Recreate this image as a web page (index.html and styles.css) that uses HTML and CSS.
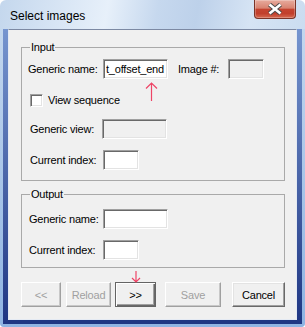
FILE: index.html
```html
<!DOCTYPE html>
<html lang="en">
<head>
    <meta charset="UTF-8">
    <title>Select images</title>
    <link rel="stylesheet" href="styles.css">
</head>
<body>
    <div class="window">
        <div class="titlebar">
            <span class="title">Select images</span>
            <button class="close" type="button">
                <svg width="42" height="19" viewBox="0 0 42 19">
                    <path d="M15.5 4.5 L26.5 13.5 M26.5 4.5 L15.5 13.5" stroke="#4b4b4b" stroke-width="4.6" fill="none"/>
                    <path d="M15.5 4.5 L26.5 13.5 M26.5 4.5 L15.5 13.5" stroke="#fff" stroke-width="2.6" fill="none"/>
                </svg>
            </button>
        </div>
        <div class="frame">
            <div class="client">
                <fieldset class="group group-input">
                    <legend>Input</legend>
                    <div class="row row-name">
                        <label class="lbl lbl-name">Generic name:</label>
                        <span class="field-wrap">
                            <input class="field field-wide" type="text" value="t_offset_end">
                            <svg class="mark mark-up" width="13" height="19" viewBox="0 0 13 19">
                                <path d="M6.5 1 V19 M1 6.5 L6.5 1 L12 6.5" stroke="#ee4466" stroke-width="1.2" fill="none"/>
                            </svg>
                        </span>
                        <label class="lbl lbl-image">Image #:</label>
                        <input class="field field-narrow" type="text" disabled>
                    </div>
                    <div class="row row-check">
                        <span class="checkbox"></span>
                        <span>View sequence</span>
                    </div>
                    <div class="row row-view">
                        <label class="lbl lbl-view">Generic view:</label>
                        <input class="field field-wide" type="text" disabled>
                    </div>
                    <div class="row row-index">
                        <label class="lbl lbl-index">Current index:</label>
                        <input class="field field-narrow" type="text">
                    </div>
                </fieldset>
                <fieldset class="group group-output">
                    <legend>Output</legend>
                    <div class="row row-out">
                        <label class="lbl lbl-out">Generic name:</label>
                        <input class="field field-wide" type="text">
                    </div>
                    <div class="row row-out row-out-index">
                        <label class="lbl lbl-out">Current index:</label>
                        <input class="field field-narrow" type="text">
                    </div>
                </fieldset>
                <div class="buttons">
                    <button class="btn btn-prev" type="button" disabled>&lt;&lt;</button>
                    <button class="btn btn-reload" type="button" disabled>Reload</button>
                    <button class="btn btn-next default" type="button">&gt;&gt;
                        <svg class="mark mark-down" width="10" height="12" viewBox="0 0 10 12">
                            <path d="M5 0 V11 M1 7 L5 11 L9 7" stroke="#ee4466" stroke-width="1.2" fill="none"/>
                        </svg>
                    </button>
                    <button class="btn btn-save" type="button" disabled>Save</button>
                    <button class="btn btn-cancel" type="button">Cancel</button>
                </div>
            </div>
        </div>
    </div>
</body>
</html>
```

FILE: styles.css
```css
*{
    margin: 0;
    padding: 0;
    box-sizing: border-box;
}
body{
    background: #fff;
    font-family: "Liberation Sans", Arial, sans-serif;
    font-size: 11px;
    letter-spacing: -0.2px;
    color: #000;
}
.window{
    width: 305px;
    height: 327px;
    display: flex;
    flex-direction: column;
    border-radius: 6px 6px 4px 4px;
    overflow: hidden;
    background: linear-gradient(100deg, #c4d7ed 0%, #d9e6f5 18%, #e7f0fa 30%, #c6d8ee 44%, #bdd1ea 55%, #d6e4f4 70%, #cadcf0 86%, #c5d9ee 100%);
}
.titlebar{
    height: 29px;
    display: flex;
    align-items: flex-start;
    padding-left: 10px;
}
.title{
    font-size: 12px;
    line-height: 12px;
    letter-spacing: 0;
    margin-top: 10px;
}
.close{
    margin-left: auto;
    margin-right: 9px;
    width: 42px;
    height: 19px;
    border: 1px solid #7a3428;
    border-top: none;
    border-radius: 0 0 4px 4px;
    background: linear-gradient(#e7ab9d 0%, #d88371 45%, #c4432f 52%, #c13f2c 75%, #d56a50 100%);
    display: flex;
    align-items: center;
    justify-content: center;
    box-shadow: inset 0 0 0 1px rgba(255,255,255,0.25);
}
.close svg{
    display: block;
    flex: none;
}

/* window frame around the client area */
.frame{
    flex: 1;
    display: flex;
    padding: 0 8px 7px;
    background:
        linear-gradient(#7695cf, #1f3683) left 3px top 0 / 5px calc(100% - 3px) no-repeat,
        linear-gradient(#7695cf, #1f3683) right 3px top 0 / 5px calc(100% - 3px) no-repeat,
        linear-gradient(#1f3683, #1f3683) left 3px bottom 3px / calc(100% - 6px) 5px no-repeat,
        linear-gradient(#c3d7ee, #8fb4e3);
}
.client{
    flex: 1;
    background: #f0f0f0;
    border: 1px solid #e4eaf3;
    border-top-color: #7c89a3;
    padding: 11px 11px 0 12px;
}

/* group boxes */
.group{
    border: 1px solid #a9a9a9;
    min-width: 0;
    padding: 5px 0 10px 0;
}
.group legend{
    margin-left: 8px;
    padding: 0 1px;
    line-height: 13px;
}
.group-output{
    margin-top: 7px;
    padding: 8px 0 7px 0;
}
.row{
    display: flex;
    align-items: center;
    height: 20px;
}
.row-name{
    padding-left: 6px;
}
.row-check{
    margin-top: 11px;
    padding-left: 8px;
}
.row-view{
    margin-top: 9px;
    padding-left: 8px;
}
.row-index{
    margin-top: 11px;
    padding-left: 8px;
}
.row-out{
    padding-left: 7px;
}
.row-out-index{
    margin-top: 11px;
}
.lbl{
    flex: none;
}
.lbl-name{
    width: 75px;
}
.lbl-image{
    width: 50px;
    margin-left: 10px;
}
.lbl-view{
    width: 72px;
}
.lbl-index{
    width: 73px;
}
.lbl-out{
    width: 74px;
}
.field-wrap{
    position: relative;
    display: flex;
}
.field{
    height: 20px;
    border: 1px solid;
    border-color: #a0a0a0 #fff #fff #a0a0a0;
    box-shadow: inset 1px 1px 0 #696969, inset -1px -1px 0 #e3e3e3;
    background: #fff;
    font: inherit;
    letter-spacing: inherit;
    color: #000;
    padding: 0 0 0 2px;
    outline: none;
}
.field:disabled{
    background: #f0f0f0;
}
.field-wide{
    width: 65px;
}
.field-narrow{
    width: 36px;
}
.checkbox{
    width: 13px;
    height: 13px;
    border: 1px solid;
    border-color: #a0a0a0 #fff #fff #a0a0a0;
    box-shadow: inset 1px 1px 0 #696969, inset -1px -1px 0 #e3e3e3;
    background: #fff;
    margin-right: 5px;
}

/* red hint arrows laid over the dialog */
.mark{
    position: absolute;
    display: block;
}
.mark-up{
    left: 42px;
    top: 23px;
}
.mark-down{
    left: 15px;
    top: -12px;
}

/* buttons */
.buttons{
    display: flex;
    margin-top: 14px;
}
.btn{
    position: relative;
    height: 25px;
    font: inherit;
    letter-spacing: inherit;
    color: #000;
    background: #f0f0f0;
    border: 1px solid;
    border-color: #fff #696969 #696969 #fff;
    box-shadow: inset -1px -1px 0 #a0a0a0, inset 1px 1px 0 #e3e3e3;
}
.btn:disabled{
    color: #a0a0a0;
    border-color: #fff #a0a0a0 #a0a0a0 #fff;
    box-shadow: inset -1px -1px 0 #c8c8c8;
}
.btn.default{
    border-color: #646464;
    box-shadow: inset 1px 1px 0 #fff, inset -1px -1px 0 #696969, inset -2px -2px 0 #a0a0a0;
}
.btn-prev{
    width: 40px;
}
.btn-reload{
    width: 45px;
    margin-left: 5px;
}
.btn-next{
    width: 41px;
    margin-left: 4px;
}
.btn-save{
    width: 56px;
    margin-left: 9px;
}
.btn-cancel{
    width: 53px;
    margin-left: 11px;
}
```
